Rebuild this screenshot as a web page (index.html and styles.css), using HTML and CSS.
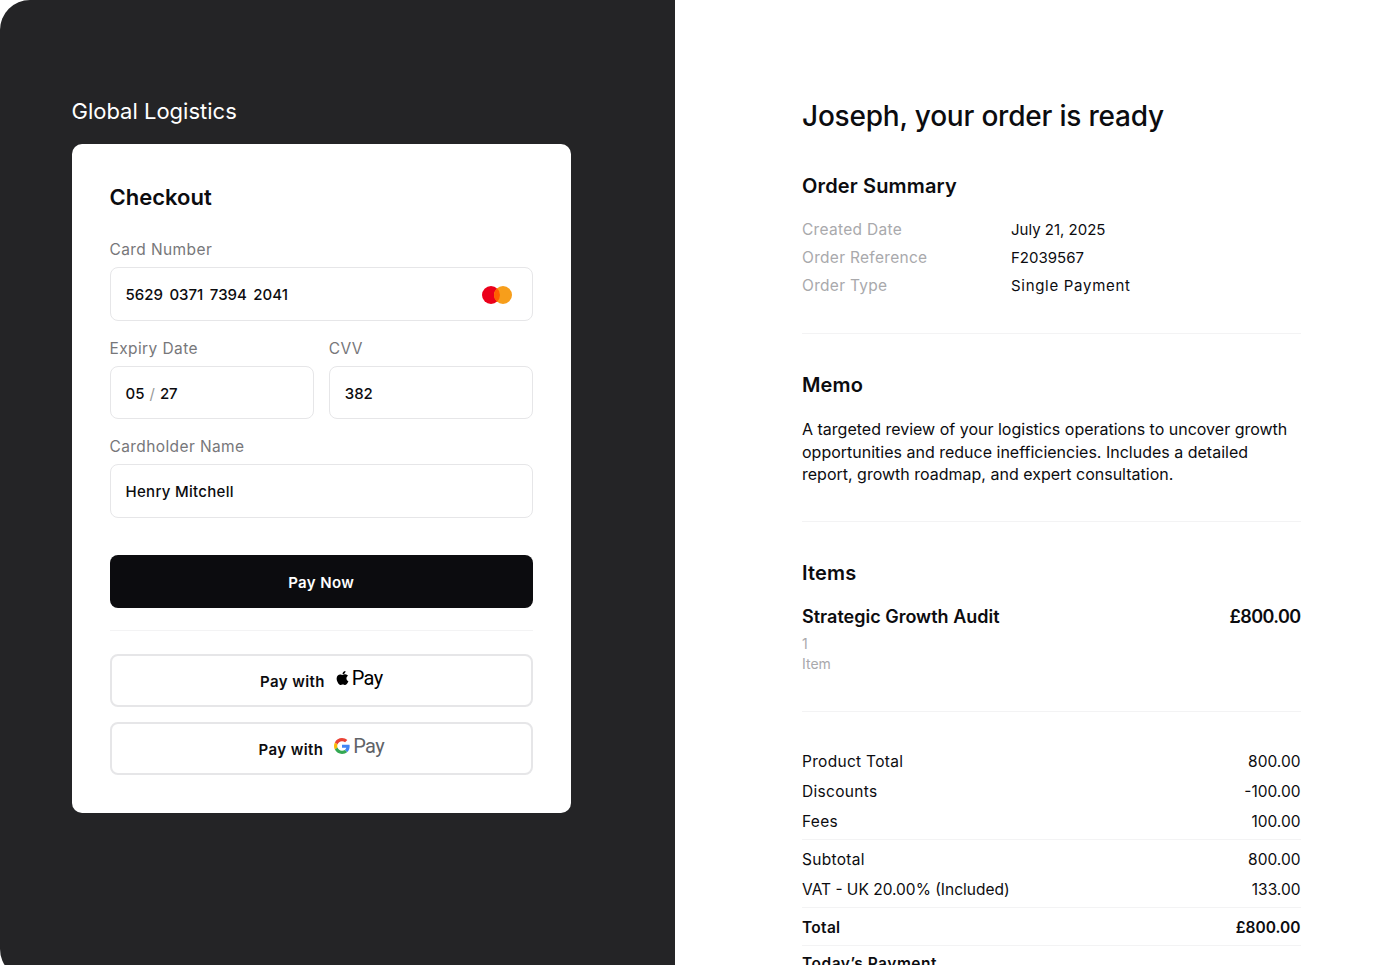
FILE: index.html
```html
<!DOCTYPE html>
<html lang="en">
<head>
    <meta charset="UTF-8">
    <meta name="viewport" content="width=device-width, initial-scale=1.0">
    <title>Checkout</title>
    <link rel="stylesheet" href="styles.css">
</head>
<body>

    <div class="page">
        <section class="pay-panel">
            <div class="brand">Global Logistics</div>

            <div class="card">
                <h1 class="card-title">Checkout</h1>

                <div class="field">
                    <label class="field-label">Card Number</label>
                    <div class="input input-card">
                        <span class="card-digits"><span>5629</span><span>0371</span><span>7394</span><span>2041</span></span>
                        <svg class="mc-logo" width="30" height="18" viewBox="0 0 30 18">
                            <circle cx="9" cy="9" r="9" fill="#eb001b"/>
                            <circle cx="21" cy="9" r="9" fill="#f79e1b"/>
                            <path d="M15 2.3a9 9 0 0 1 0 13.4a9 9 0 0 1 0-13.4z" fill="#ff5f00"/>
                        </svg>
                    </div>
                </div>

                <div class="field-row">
                    <div class="field">
                        <label class="field-label">Expiry Date</label>
                        <div class="input">05 <span class="slash">/</span> 27</div>
                    </div>
                    <div class="field">
                        <label class="field-label">CVV</label>
                        <div class="input">382</div>
                    </div>
                </div>

                <div class="field">
                    <label class="field-label">Cardholder Name</label>
                    <div class="input input-name">Henry Mitchell</div>
                </div>

                <button class="pay-now">Pay Now</button>

                <div class="card-divider"></div>

                <button class="wallet-btn">
                    <span>Pay with</span>
                    <span class="wallet-mark">
                        <svg class="apple-logo" width="13" height="16" viewBox="0 0 384 512">
                            <path fill="#000" d="M318.7 268.7c-.2-36.7 16.4-64.4 50-84.8-18.8-26.9-47.2-41.7-84.7-44.6-35.5-2.8-74.3 20.7-88.5 20.7-15 0-49.4-19.7-76.4-19.7C63.3 141.2 4 184.8 4 273.5q0 39.3 14.4 81.2c12.8 36.7 59 126.7 107.2 125.2 25.2-.6 43-17.9 75.8-17.9 31.8 0 48.3 17.9 76.4 17.9 48.6-.7 90.4-82.5 102.6-119.3-65.2-30.7-61.7-90-61.7-91.9zm-56.6-164.2c27.3-32.4 24.8-61.9 24-72.5-24.1 1.4-52 16.4-67.9 34.9-17.5 19.8-27.8 44.3-25.6 71.9 26.1 2 49.9-11.4 69.5-34.3z"/>
                        </svg>
                        <span class="wallet-word">Pay</span>
                    </span>
                </button>

                <button class="wallet-btn">
                    <span>Pay with</span>
                    <span class="wallet-mark">
                        <svg class="google-logo" width="16" height="16" viewBox="0 0 48 48">
                            <path fill="#EA4335" d="M24 9.5c3.54 0 6.71 1.22 9.21 3.6l6.85-6.85C35.9 2.38 30.47 0 24 0 14.62 0 6.51 5.38 2.56 13.22l7.98 6.19C12.43 13.72 17.74 9.5 24 9.5z"/>
                            <path fill="#4285F4" d="M46.98 24.55c0-1.57-.15-3.09-.38-4.55H24v9.02h12.94c-.58 2.96-2.26 5.48-4.78 7.18l7.73 6c4.51-4.18 7.09-10.36 7.09-17.65z"/>
                            <path fill="#FBBC05" d="M10.53 28.59c-.48-1.45-.76-2.99-.76-4.59s.27-3.14.76-4.59l-7.98-6.19C.92 16.46 0 20.12 0 24c0 3.88.92 7.54 2.56 10.78l7.97-6.19z"/>
                            <path fill="#34A853" d="M24 48c6.48 0 11.93-2.13 15.89-5.81l-7.73-6c-2.15 1.45-4.92 2.3-8.16 2.3-6.26 0-11.57-4.22-13.47-9.91l-7.98 6.19C6.51 42.62 14.62 48 24 48z"/>
                        </svg>
                        <span class="wallet-word wallet-word-grey">Pay</span>
                    </span>
                </button>
            </div>
        </section>

        <section class="order-panel">
            <h1 class="order-heading">Joseph, your order is ready</h1>

            <div class="block block-summary">
                <h2 class="block-title">Order Summary</h2>
                <div class="meta-row"><span class="meta-key">Created Date</span><span>July 21, 2025</span></div>
                <div class="meta-row"><span class="meta-key">Order Reference</span><span>F2039567</span></div>
                <div class="meta-row"><span class="meta-key">Order Type</span><span class="meta-wide">Single Payment</span></div>
            </div>

            <div class="block block-memo">
                <h2 class="block-title">Memo</h2>
                <p class="memo-text">A targeted review of your logistics operations to uncover growth opportunities and reduce inefficiencies. Includes a detailed report, growth roadmap, and expert consultation.</p>
            </div>

            <div class="block block-items">
                <h2 class="block-title">Items</h2>
                <div class="item-head"><span>Strategic Growth Audit</span><span class="item-price">£800.00</span></div>
                <div class="item-sub">1</div>
                <div class="item-sub">Item</div>
            </div>

            <div class="totals">
                <div class="total-row"><span>Product Total</span><span>800.00</span></div>
                <div class="total-row"><span>Discounts</span><span>-100.00</span></div>
                <div class="total-row"><span>Fees</span><span>100.00</span></div>
                <div class="total-line"></div>
                <div class="total-row"><span>Subtotal</span><span>800.00</span></div>
                <div class="total-row"><span class="total-vat">VAT - UK 20.00% (Included)</span><span>133.00</span></div>
                <div class="total-line"></div>
                <div class="total-row total-strong"><span>Total</span><span class="total-amount">£800.00</span></div>
                <div class="total-line"></div>
                <div class="total-row total-strong total-today"><span>Today’s Payment</span></div>
            </div>
        </section>
    </div>

</body>
</html>
```

FILE: styles.css
```css
html, body {
    margin: 0;
    padding: 0;
    height: 965px;
    overflow: hidden;
    background-color: #fff;
}

body {
    font-family: Inter, "Open Sans", sans-serif;
    color: #0c0c0f;
}

h1, h2, p {
    margin: 0;
}

.page {
    display: grid;
    grid-template-columns: 675px 1fr;
    height: 965px;
    overflow: hidden;
}

/* left side */
.pay-panel {
    background-color: #242426;
    border-radius: 30px 0 0 30px;
    padding: 98px 104px 0 71.5px;
}

.brand {
    color: #fff;
    font-size: 22px;
    line-height: 27px;
    height: 46px;
}

.card {
    background-color: #fff;
    border-radius: 10px;
    padding: 38px;
    height: 669px;
    box-sizing: border-box;
}

.card-title {
    font-size: 22px;
    font-weight: 600;
    line-height: 30px;
    margin-bottom: 27px;
}

.field {
    margin-bottom: 17px;
}

.field-label {
    display: block;
    font-size: 15.5px;
    letter-spacing: 0.4px;
    line-height: 22px;
    color: #77777a;
    margin-bottom: 6px;
}

.input {
    display: flex;
    align-items: center;
    gap: 5px;
    height: 53.5px;
    box-sizing: border-box;
    padding: 2px 15px 0;
    border: 1px solid #e6e6e8;
    border-radius: 8px;
    font-size: 15px;
    font-weight: 500;
}

.input-card {
    justify-content: space-between;
    padding-right: 20px;
}

.input-name {
    letter-spacing: 0.3px;
}

.card-digits {
    display: flex;
    gap: 6.5px;
}

.slash {
    color: #999;
    font-weight: 400;
}

.field-row {
    display: grid;
    grid-template-columns: 1fr 1fr;
    gap: 15px;
}

.pay-now {
    display: block;
    width: 100%;
    height: 53px;
    margin-top: 37.5px;
    padding-top: 2px;
    border: none;
    border-radius: 8px;
    background-color: #0c0c0f;
    color: #fff;
    font-family: inherit;
    font-size: 15px;
    font-weight: 600;
    letter-spacing: 0.4px;
}

.card-divider {
    height: 1px;
    background-color: #f3f3f4;
    margin: 22px 0 23px;
}

.wallet-btn {
    display: flex;
    align-items: center;
    justify-content: center;
    gap: 11px;
    width: 100%;
    height: 53px;
    margin-bottom: 15px;
    padding: 2px 0 0;
    background-color: #fff;
    border: 2px solid #e6e6e8;
    border-radius: 8px;
    color: #0c0c0f;
    font-family: inherit;
    font-size: 15px;
    font-weight: 600;
    letter-spacing: 0.4px;
}

.wallet-btn:last-child {
    margin-bottom: 0;
}

.wallet-mark {
    display: flex;
    align-items: center;
    gap: 3px;
    margin-bottom: 8px;
}

.wallet-word {
    font-family: Roboto, sans-serif;
    font-size: 20px;
    font-weight: 400;
    letter-spacing: -0.7px;
    line-height: 24px;
    color: #000;
}

.wallet-word-grey {
    color: #5f6368;
}

/* right side */
.order-panel {
    padding: 97px 74.5px 0 127px;
}

.order-heading {
    font-size: 28px;
    font-weight: 500;
    letter-spacing: -0.2px;
    line-height: 38px;
    margin-bottom: 38px;
}

.block {
    border-bottom: 1px solid #f3f3f4;
}

.block-title {
    font-size: 20px;
    font-weight: 600;
    letter-spacing: 0.15px;
    line-height: 26px;
}

.block-summary {
    height: 160px;
    margin-bottom: 38px;
}

.block-summary .block-title {
    margin-bottom: 17px;
}

.meta-row {
    display: grid;
    grid-template-columns: 209px 1fr;
    font-size: 15px;
    line-height: 28px;
}

.meta-key {
    color: #a9a9ac;
    font-size: 15.5px;
    letter-spacing: 0.3px;
}

.meta-wide {
    letter-spacing: 0.7px;
}

.block-memo {
    height: 149px;
    margin-bottom: 38px;
}

.block-memo .block-title {
    margin-bottom: 20px;
}

.memo-text {
    font-size: 16px;
    line-height: 22.5px;
}

.block-items {
    height: 151px;
    margin-bottom: 35px;
}

.block-items .block-title {
    margin-bottom: 18px;
}

.item-head {
    display: flex;
    justify-content: space-between;
    font-size: 18px;
    font-weight: 600;
    line-height: 26px;
    margin-bottom: 4px;
}

.item-price {
    letter-spacing: -0.6px;
}

.item-sub {
    font-size: 14px;
    line-height: 20px;
    color: #a9a9ac;
}

.total-row {
    display: flex;
    justify-content: space-between;
    font-size: 15.5px;
    letter-spacing: 0.3px;
    line-height: 30px;
}

.total-row span:last-child {
    letter-spacing: 0;
}

.total-row .total-vat {
    letter-spacing: 0;
}

.total-strong {
    font-weight: 600;
}

.total-row .total-amount {
    letter-spacing: -0.2px;
}

.total-today {
    margin-top: -2px;
}

.total-today span:last-child {
    letter-spacing: 0.5px;
}

.total-line {
    height: 1px;
    background-color: #f3f3f4;
    margin: 2px 0 5px;
}
```
